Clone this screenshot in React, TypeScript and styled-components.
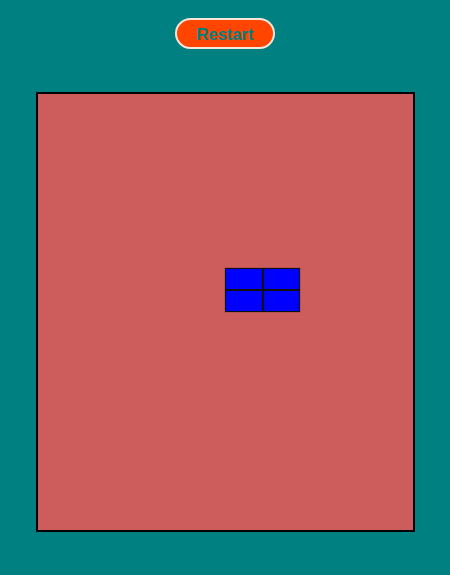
import { createGlobalStyle } from 'styled-components';
import styled from 'styled-components';

const COLS = 10;
const ROWS = 20;
const CELL_W = 37.5;
const CELL_H = 21.8;

const GlobalStyle = createGlobalStyle`
  body {
    margin: 0;
    background-color: teal;
    font-family: "Liberation Sans", Arial, sans-serif;
  }
`;

const Wrapper = styled.div`
  display: flex;
  flex-direction: column;
  align-items: center;
  padding-top: 18px;
`;

const RestartBtn = styled.button`
  width: 100px;
  height: 31px;
  border-radius: 16px;
  background-color: #ff4500;
  border: 2px solid #f3e6dc;
  color: teal;
  font-family: "Liberation Sans", Arial, sans-serif;
  font-size: 16.5px;
  font-weight: bold;
  padding: 2px 0 0;
  cursor: pointer;
`;

const Board = styled.div`
  position: relative;
  margin-top: 43px;
  width: ${COLS * CELL_W}px;
  height: ${ROWS * CELL_H}px;
  background-color: indianred;
  border: 2px solid #000;
`;

const Cell = styled.div<{ $color: string }>`
  position: absolute;
  box-sizing: border-box;
  width: ${CELL_W}px;
  height: ${CELL_H}px;
  background-color: ${(props) => props.$color};
  border: 1px solid #111;
  box-shadow: 0 0 1px rgba(0, 0, 0, 0.6);
`;

// the piece currently on the board (col, row)
const piece = [
  { x: 5, y: 8 },
  { x: 6, y: 8 },
  { x: 5, y: 9 },
  { x: 6, y: 9 },
];

function App() {
  return (
    <Wrapper>
      <GlobalStyle />
      <RestartBtn>Restart</RestartBtn>
      <Board>
        {piece.map((c) => (
          <Cell
            key={`${c.x}-${c.y}`}
            $color="blue"
            style={{ left: c.x * CELL_W, top: c.y * CELL_H }}
          />
        ))}
      </Board>
    </Wrapper>
  );
}

export default App;
